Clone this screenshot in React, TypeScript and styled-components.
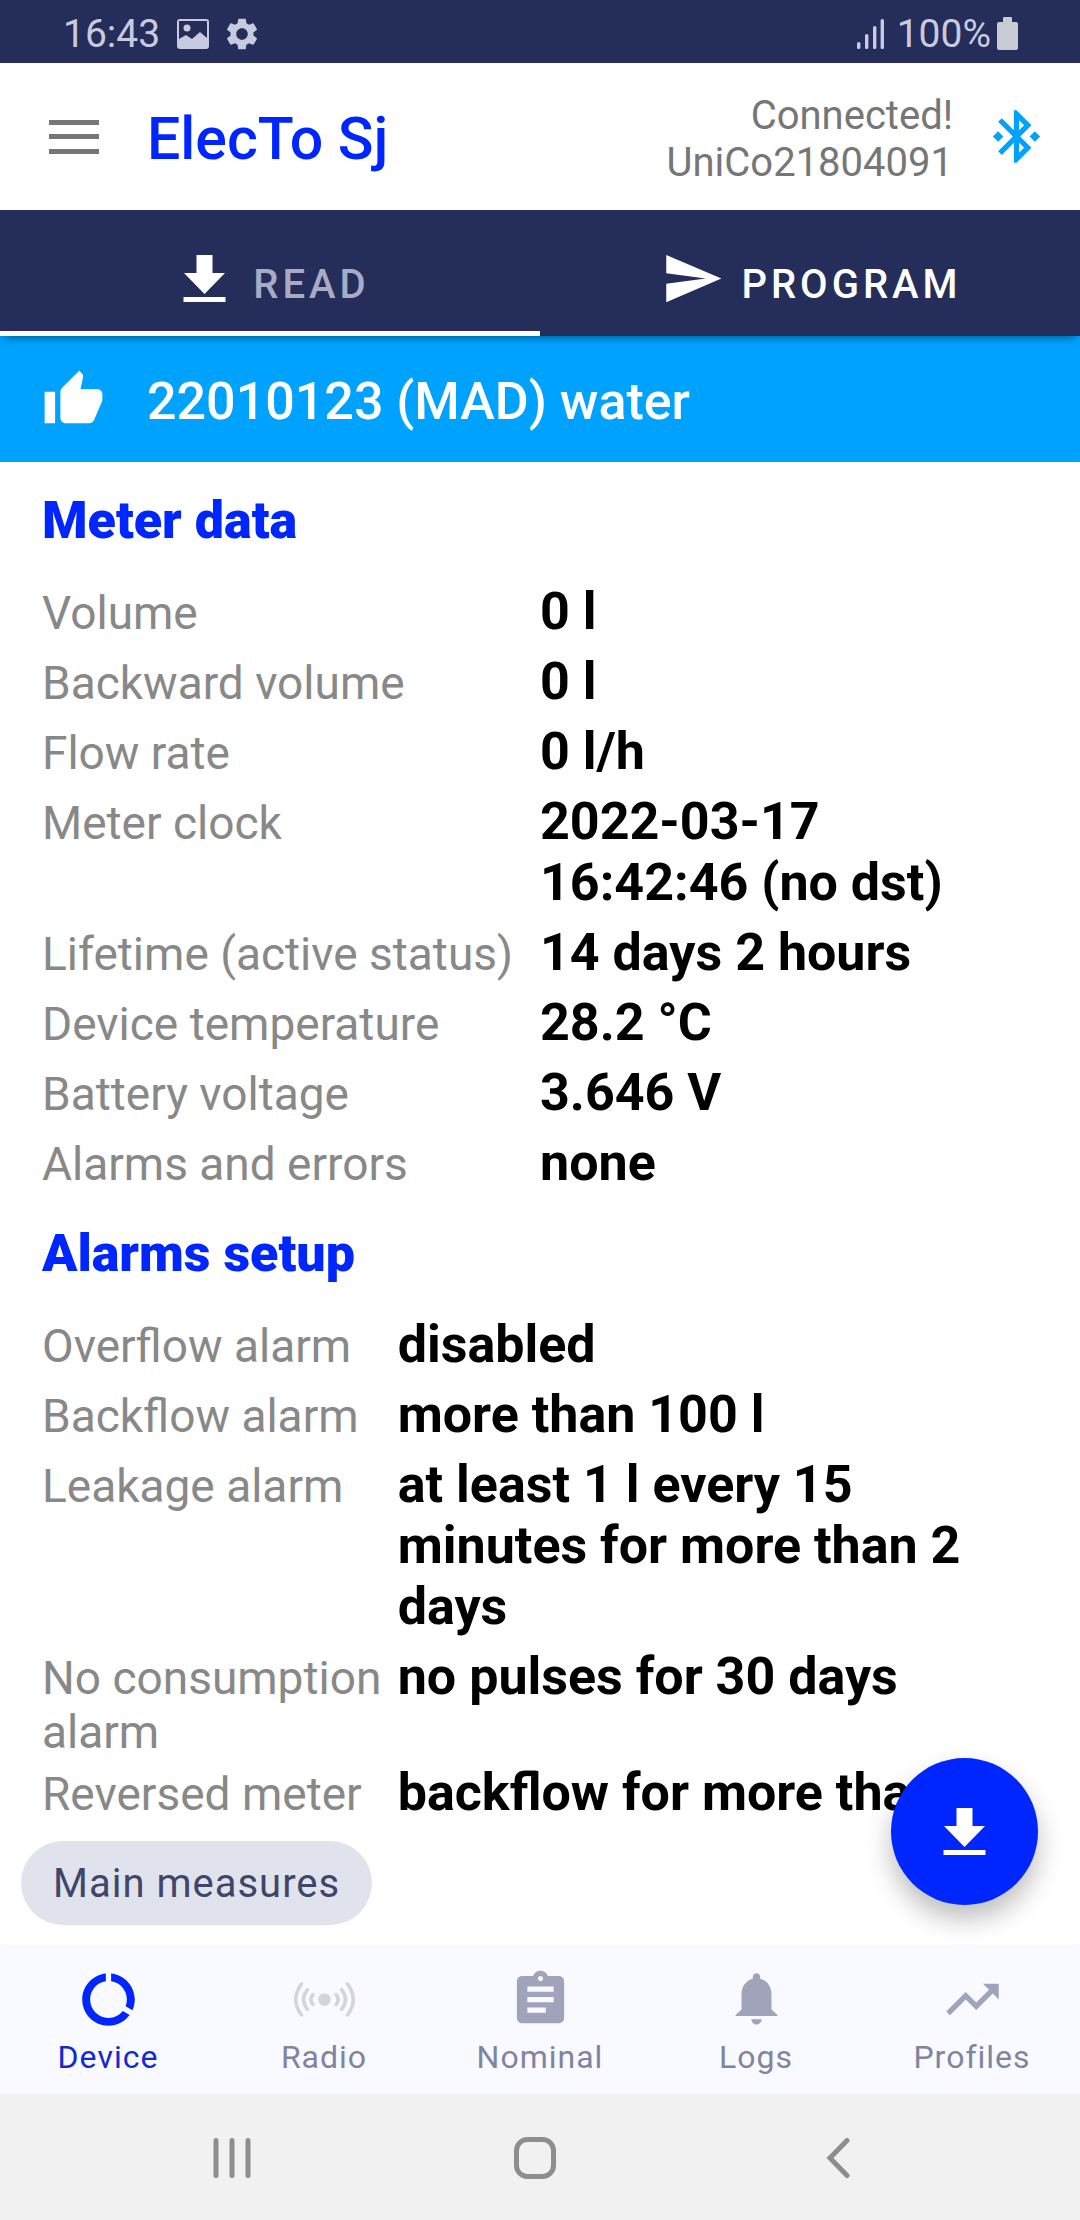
import React from "react";
import styled, { createGlobalStyle } from "styled-components";
import {
  MdAssignment,
  MdBluetoothConnected,
  MdDataUsage,
  MdSend,
  MdThumbUp,
  MdTrendingUp,
} from "react-icons/md";

const color = {
  navy: "#252d5a",
  blue: "#0026ff",
  sky: "#00a2ff",
  status: "#c8cbdf",
  grey: "#767676",
  label: "#888888",
  navText: "#8184a0",
  navIcon: "#a0a3ba",
};

const GlobalStyle = createGlobalStyle`
  *, *::before, *::after { box-sizing: border-box; }
  body { margin: 0; background: #fff; font-family: Roboto, "Noto Sans", sans-serif; }
  button { border: 0; padding: 0; background: none; font: inherit; color: inherit; cursor: pointer; }
  h1, h2, p { margin: 0; }
  svg { display: block; flex: none; }
`;

const Screen = styled.div`
  display: flex;
  flex-direction: column;
  height: 100vh;
`;

const StatusBar = styled.div`
  display: flex;
  align-items: center;
  height: 63px;
  flex: none;
  padding: 4px 62px 0 63px;
  background: ${color.navy};
  color: ${color.status};
  font-size: 39px;
  line-height: 46px;
`;

const StatusGroup = styled.div<{ $gap: number }>`
  display: flex;
  align-items: center;
  gap: ${(p) => p.$gap}px;
  &:last-child { margin-left: auto; }
`;

const Charge = styled.div`
  display: flex;
  align-items: center;
  gap: 6px;
`;

const AppBar = styled.header`
  display: flex;
  align-items: center;
  height: 147px;
  flex: none;
  padding: 0 32px 0 42px;
  background: #fff;
`;

const IconButton = styled.button<{ $color: string }>`
  display: grid;
  place-items: center;
  width: 63px;
  height: 63px;
  color: ${(p) => p.$color};
`;

const Title = styled.h1`
  margin-left: 42px;
  padding-top: 4px;
  color: ${color.blue};
  font-size: 59px;
  line-height: 68px;
  font-weight: 500;
`;

const Connection = styled.p`
  margin-left: auto;
  margin-right: 32px;
  padding-top: 4px;
  color: ${color.grey};
  font-size: 40px;
  line-height: 47px;
  text-align: right;
`;

const Tabs = styled.div`
  display: grid;
  grid-template-columns: 1fr 1fr;
  height: 126px;
  flex: none;
  background: ${color.navy};
  box-shadow: 0 6px 8px -4px rgba(0, 0, 0, 0.4);
  z-index: 1;
`;

const Tab = styled.button<{ $selected: boolean }>`
  display: flex;
  align-items: center;
  justify-content: center;
  gap: 17px;
  padding: 16px 0 0 3px;
  border-bottom: 5px solid ${(p) => (p.$selected ? "#fff" : "transparent")};
  color: #fff;
`;

const TabLabel = styled.span<{ $dim: boolean }>`
  padding-top: 12px;
  color: ${(p) => (p.$dim ? "#a8abc3" : "#fff")};
  font-size: 40px;
  line-height: 47px;
  font-weight: 500;
  letter-spacing: 4px;
`;

const Banner = styled.div`
  display: flex;
  align-items: center;
  gap: 42px;
  height: 126px;
  flex: none;
  padding: 0 42px;
  background: ${color.sky};
  color: #fff;
`;

const BannerText = styled.p`
  padding-top: 4px;
  font-size: 52px;
  line-height: 61px;
  font-weight: 500;
`;

const Content = styled.main`
  flex: 1;
  min-height: 0;
  overflow-y: auto;
  scrollbar-width: none;
  padding: 28px 42px 0;
`;

const Heading = styled.h2`
  color: ${color.blue};
  font-size: 52px;
  line-height: 61px;
  font-weight: 900;
`;

const Readings = styled.dl<{ $columns: string }>`
  display: grid;
  grid-template-columns: ${(p) => p.$columns};
  align-items: baseline;
  row-gap: 9px;
  margin: 30px 0;
`;

const Name = styled.dt`
  margin-bottom: -6px;
  color: ${color.label};
  font-size: 46px;
  line-height: 54px;
`;

const Value = styled.dd`
  margin: 0;
  padding-right: 21px;
  color: #000;
  font-size: 52px;
  line-height: 61px;
  font-weight: 700;
`;

const Footer = styled.div`
  position: relative;
  flex: none;
  padding: 18px 21px 22px;
`;

const Chip = styled.button`
  display: block;
  height: 84px;
  padding: 0 32px;
  border-radius: 42px;
  background: #e1e3ec;
  color: #40466b;
  font-size: 40px;
  line-height: 47px;
  letter-spacing: 1px;
`;

const Fab = styled.button`
  position: absolute;
  right: 42px;
  bottom: 42px;
  display: grid;
  place-items: center;
  width: 147px;
  height: 147px;
  border-radius: 50%;
  background: ${color.blue};
  color: #fff;
  box-shadow: 0 14px 26px rgba(0, 0, 0, 0.26);
`;

const BottomNav = styled.nav`
  display: grid;
  grid-template-columns: repeat(5, 1fr);
  height: 147px;
  flex: none;
  background: #f9faff;
  box-shadow: 0 -2px 3px rgba(0, 0, 0, 0.03);
`;

const NavItem = styled.button<{ $active?: boolean }>`
  display: flex;
  flex-direction: column;
  align-items: center;
  gap: 7px;
  padding-top: 21px;
  color: ${(p) => (p.$active ? color.blue : color.navIcon)};
`;

const NavLabel = styled.span<{ $active?: boolean }>`
  color: ${(p) => (p.$active ? "#1429d0" : color.navText)};
  font-size: 32px;
  line-height: 38px;
  letter-spacing: 1px;
`;

const SystemNav = styled.div`
  display: grid;
  grid-template-columns: repeat(3, 1fr);
  height: 126px;
  flex: none;
  padding: 2px 90px 0 80px;
  background: #f1f1f1;
  color: #8e8e8e;
`;

const SystemButton = styled.button`
  display: grid;
  place-items: center;
`;

const ICON = 63;

const PictureIcon = () => (
  <svg width="32" height="30" viewBox="0 0 32 30" fill="currentColor" aria-hidden="true">
    <path
      fillRule="evenodd"
      d="M3 0h26a3 3 0 0 1 3 3v24a3 3 0 0 1-3 3H3a3 3 0 0 1-3-3V3a3 3 0 0 1 3-3zm-1 2v18l7-4 6 4 8-7 7 6V2z"
    />
    <circle cx="10" cy="9" r="3.5" />
  </svg>
);

const GearIcon = () => (
  <svg width="32" height="32" viewBox="2 2 20 20" fill="currentColor" aria-hidden="true">
    <path d="M19.14 12.94c.04-.3.06-.61.06-.94 0-.32-.02-.64-.07-.94l2.03-1.58c.18-.14.23-.41.12-.61l-1.92-3.32c-.12-.22-.37-.29-.59-.22l-2.39.96c-.5-.38-1.03-.7-1.62-.94l-.36-2.54c-.04-.24-.24-.41-.48-.41h-3.84c-.24 0-.43.17-.47.41l-.36 2.54c-.59.24-1.13.57-1.62.94l-2.39-.96c-.22-.08-.47 0-.59.22L2.74 8.87c-.12.21-.08.47.12.61l2.03 1.58c-.05.3-.09.63-.09.94s.02.64.07.94l-2.03 1.58c-.18.14-.23.41-.12.61l1.92 3.32c.12.22.37.29.59.22l2.39-.96c.5.38 1.03.7 1.62.94l.36 2.54c.05.24.24.41.48.41h3.84c.24 0 .44-.17.47-.41l.36-2.54c.59-.24 1.13-.56 1.62-.94l2.39.96c.22.08.47 0 .59-.22l1.92-3.32c.12-.22.07-.47-.12-.61l-2.01-1.58zM12 15.6c-1.98 0-3.6-1.62-3.6-3.6s1.62-3.6 3.6-3.6 3.6 1.62 3.6 3.6-1.62 3.6-3.6 3.6z" />
  </svg>
);

const SignalIcon = () => (
  <svg width="28" height="32" viewBox="0 0 28 32" fill="currentColor" aria-hidden="true">
    <rect x="0" y="24" width="3.4" height="7" rx="1.5" />
    <rect x="8" y="16" width="3.4" height="15" rx="1.5" />
    <rect x="16" y="8" width="3.4" height="23" rx="1.5" />
    <rect x="23.6" y="1" width="3.4" height="30" rx="1.5" />
  </svg>
);

const BatteryIcon = () => (
  <svg width="21" height="33" viewBox="0 0 21 33" fill="#c9cbd3" aria-hidden="true">
    <path d="M7 0h7a1 1 0 0 1 1 1v4h4a2 2 0 0 1 2 2v24a2 2 0 0 1-2 2H2a2 2 0 0 1-2-2V7a2 2 0 0 1 2-2h4V1a1 1 0 0 1 1-1z" />
  </svg>
);

const MenuIcon = () => (
  <svg width="50" height="34" viewBox="0 0 50 34" fill="currentColor" aria-hidden="true">
    <path d="M0 0h50v5H0zM0 14h50v5H0zM0 29h50v5H0z" />
  </svg>
);

const DownloadIcon = () => (
  <svg width={ICON} height={ICON} viewBox="0 0 63 63" fill="currentColor" aria-hidden="true">
    <path d="M23.5 8h16v18H52L31.5 47 11 26h12.5zM10.5 50h42v5h-42z" />
  </svg>
);

const RadioIcon = () => (
  <svg
    width={ICON}
    height={ICON}
    viewBox="0 0 63 63"
    fill="none"
    stroke="#d3d4df"
    strokeWidth="3.5"
    strokeLinecap="round"
    aria-hidden="true"
  >
    <circle cx="31.5" cy="31.5" r="6.3" fill="#d3d4df" stroke="none" />
    <path d="M20 26.5q-4.5 5 0 10M14.5 21.5q-8 10 0 20M8.5 16q-11.5 15.5 0 31M43 26.5q4.5 5 0 10M48.5 21.5q8 10 0 20M54.5 16q11.5 15.5 0 31" />
  </svg>
);

const BellIcon = () => (
  <svg width={ICON} height={ICON} viewBox="0 0 24 24" fill="currentColor" aria-hidden="true">
    <path d="M12 21.5c1.1 0 1.9-.9 2-2h-4c.1 1.1.9 2 2 2zM17.7 15.8V10c0-3-1.7-5.2-4.3-5.9V3.4C13.4 2.6 12.8 2 12 2s-1.4.6-1.4 1.4v.7C8 4.8 6.3 7 6.3 10v5.8L4 17.9v.4h16v-.4z" />
  </svg>
);

const RecentsIcon = () => (
  <svg
    width="38"
    height="42"
    viewBox="0 0 38 42"
    stroke="currentColor"
    strokeWidth="5"
    strokeLinecap="round"
    aria-hidden="true"
  >
    <path d="M3 3.5v35M19 3.5v35M35 3.5v35" />
  </svg>
);

const HomeIcon = () => (
  <svg width="42" height="42" viewBox="0 0 42 42" fill="none" stroke="currentColor" strokeWidth="5" aria-hidden="true">
    <rect x="2.5" y="2.5" width="37" height="37" rx="11" />
  </svg>
);

const BackIcon = () => (
  <svg
    width="24"
    height="42"
    viewBox="0 0 24 42"
    fill="none"
    stroke="currentColor"
    strokeWidth="5"
    strokeLinecap="round"
    aria-hidden="true"
  >
    <path d="M21 3.5L4 21l17 17.5" />
  </svg>
);

type Reading = [name: string, value: string];

const meterData: Reading[] = [
  ["Volume", "0 l"],
  ["Backward volume", "0 l"],
  ["Flow rate", "0 l/h"],
  ["Meter clock", "2022-03-17 16:42:46 (no dst)"],
  ["Lifetime (active status)", "14 days 2 hours"],
  ["Device temperature", "28.2 °C"],
  ["Battery voltage", "3.646 V"],
  ["Alarms and errors", "none"],
];

const alarmsSetup: Reading[] = [
  ["Overflow alarm", "disabled"],
  ["Backflow alarm", "more than 100 l"],
  ["Leakage alarm", "at least 1 l every 15 minutes for more than 2 days"],
  ["No consumption alarm", "no pulses for 30 days"],
  ["Reversed meter", "backflow for more than"],
];

function Section({ title, columns, rows }: { title: string; columns: string; rows: Reading[] }) {
  return (
    <section>
      <Heading>{title}</Heading>
      <Readings $columns={columns}>
        {rows.map(([name, value]) => (
          <React.Fragment key={name}>
            <Name>{name}</Name>
            <Value>{value}</Value>
          </React.Fragment>
        ))}
      </Readings>
    </section>
  );
}

const destinations = [
  { label: "Device", icon: <MdDataUsage size={ICON} />, active: true },
  { label: "Radio", icon: <RadioIcon /> },
  { label: "Nominal", icon: <MdAssignment size={ICON} /> },
  { label: "Logs", icon: <BellIcon /> },
  { label: "Profiles", icon: <MdTrendingUp size={ICON} /> },
];

export default function App() {
  return (
    <Screen>
      <GlobalStyle />
      <StatusBar>
        <StatusGroup $gap={17}>
          <span>16:43</span>
          <PictureIcon />
          <GearIcon />
        </StatusGroup>
        <StatusGroup $gap={12}>
          <SignalIcon />
          <Charge>
            <span>100%</span>
            <BatteryIcon />
          </Charge>
        </StatusGroup>
      </StatusBar>

      <AppBar>
        <IconButton type="button" $color={color.grey} aria-label="Menu">
          <MenuIcon />
        </IconButton>
        <Title>ElecTo Sj</Title>
        <Connection>
          Connected!
          <br />
          UniCo21804091
        </Connection>
        <IconButton type="button" $color={color.sky} aria-label="Bluetooth">
          <MdBluetoothConnected size={ICON} />
        </IconButton>
      </AppBar>

      <Tabs role="tablist">
        <Tab type="button" role="tab" aria-selected="true" $selected>
          <DownloadIcon />
          <TabLabel $dim>READ</TabLabel>
        </Tab>
        <Tab type="button" role="tab" aria-selected="false" $selected={false}>
          <MdSend size={ICON} />
          <TabLabel $dim={false}>PROGRAM</TabLabel>
        </Tab>
      </Tabs>

      <Banner>
        <MdThumbUp size={ICON} />
        <BannerText>22010123 (MAD) water</BannerText>
      </Banner>

      <Content>
        <Section title="Meter data" columns="1fr 1fr" rows={meterData} />
        <Section title="Alarms setup" columns="5fr 9fr" rows={alarmsSetup} />
      </Content>

      <Footer>
        <Chip type="button">Main measures</Chip>
        <Fab type="button" aria-label="Read device">
          <DownloadIcon />
        </Fab>
      </Footer>

      <BottomNav>
        {destinations.map(({ label, icon, active }) => (
          <NavItem key={label} type="button" $active={active}>
            {icon}
            <NavLabel $active={active}>{label}</NavLabel>
          </NavItem>
        ))}
      </BottomNav>

      <SystemNav>
        <SystemButton type="button" aria-label="Recent apps">
          <RecentsIcon />
        </SystemButton>
        <SystemButton type="button" aria-label="Home">
          <HomeIcon />
        </SystemButton>
        <SystemButton type="button" aria-label="Back">
          <BackIcon />
        </SystemButton>
      </SystemNav>
    </Screen>
  );
}
